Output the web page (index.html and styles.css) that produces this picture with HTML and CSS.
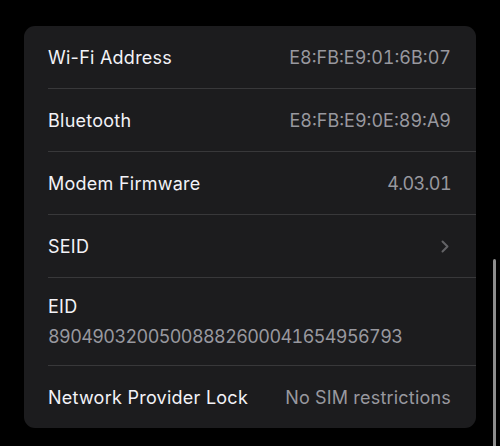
FILE: index.html
```html
<!DOCTYPE html>
<html lang="en">
<head>
    <meta charset="UTF-8">
    <meta name="viewport" content="width=device-width, initial-scale=1.0">
    <title>About</title>
    <link rel="stylesheet" href="styles.css">
</head>
<body>
    <div class="card">
        <div class="row">
            <div class="row-inner">
                <span class="label">Wi-Fi Address</span>
                <span class="value">E8:FB:E9:01:6B:07</span>
            </div>
        </div>
        <div class="row">
            <div class="row-inner">
                <span class="label">Bluetooth</span>
                <span class="value">E8:FB:E9:0E:89:A9</span>
            </div>
        </div>
        <div class="row">
            <div class="row-inner">
                <span class="label">Modem Firmware</span>
                <span class="value digits">4.03.01</span>
            </div>
        </div>
        <div class="row">
            <div class="row-inner">
                <span class="label">SEID</span>
                <svg class="chevron" width="8" height="13" viewBox="0 0 8 13">
                    <polyline points="1.5,1.5 6.5,6.5 1.5,11.5" fill="none" stroke="#636366" stroke-width="2" stroke-linecap="round" stroke-linejoin="round"/>
                </svg>
            </div>
        </div>
        <div class="row row-tall">
            <div class="row-inner stacked">
                <span class="label">EID</span>
                <span class="value digits">89049032005008882600041654956793</span>
            </div>
        </div>
        <div class="row last">
            <div class="row-inner">
                <span class="label">Network Provider Lock</span>
                <span class="value text">No SIM restrictions</span>
            </div>
        </div>
    </div>
    <div class="scrollbar"></div>
</body>
</html>
```
FILE: styles.css
```css
body {
    margin: 0;
    padding: 26px 0 0 24px;
    background: #000;
    font-family: 'Inter', 'Noto Sans', sans-serif;
    font-size: 18px;
    color: #f2f2f7;
    height: 446px;
    box-sizing: border-box;
    overflow: hidden;
}
.card {
    width: 452px;
    background-color: #1c1c1e;
    border-radius: 11px;
}
.row {
    padding-left: 24px;
}
.row-inner {
    display: flex;
    justify-content: space-between;
    align-items: center;
    height: 62px;
    padding-right: 25px;
    border-bottom: 1px solid #38383a;
}
.row.last .row-inner {
    border-bottom: none;
}
.row-tall .row-inner {
    height: 87px;
}
.stacked {
    flex-direction: column;
    align-items: flex-start;
    justify-content: center;
    gap: 9px;
}
.label {
    letter-spacing: 0.25px;
}
.value {
    color: #98989f;
    font-variant-numeric: tabular-nums;
}
.value.digits {
    letter-spacing: -0.6px;
}
.value.text {
    letter-spacing: 0.2px;
}
.chevron {
    margin-right: 2px;
}
.scrollbar {
    position: absolute;
    left: 493px;
    top: 259px;
    width: 3px;
    height: 200px;
    border-radius: 2px;
    background: #8e8e8e;
}
```
